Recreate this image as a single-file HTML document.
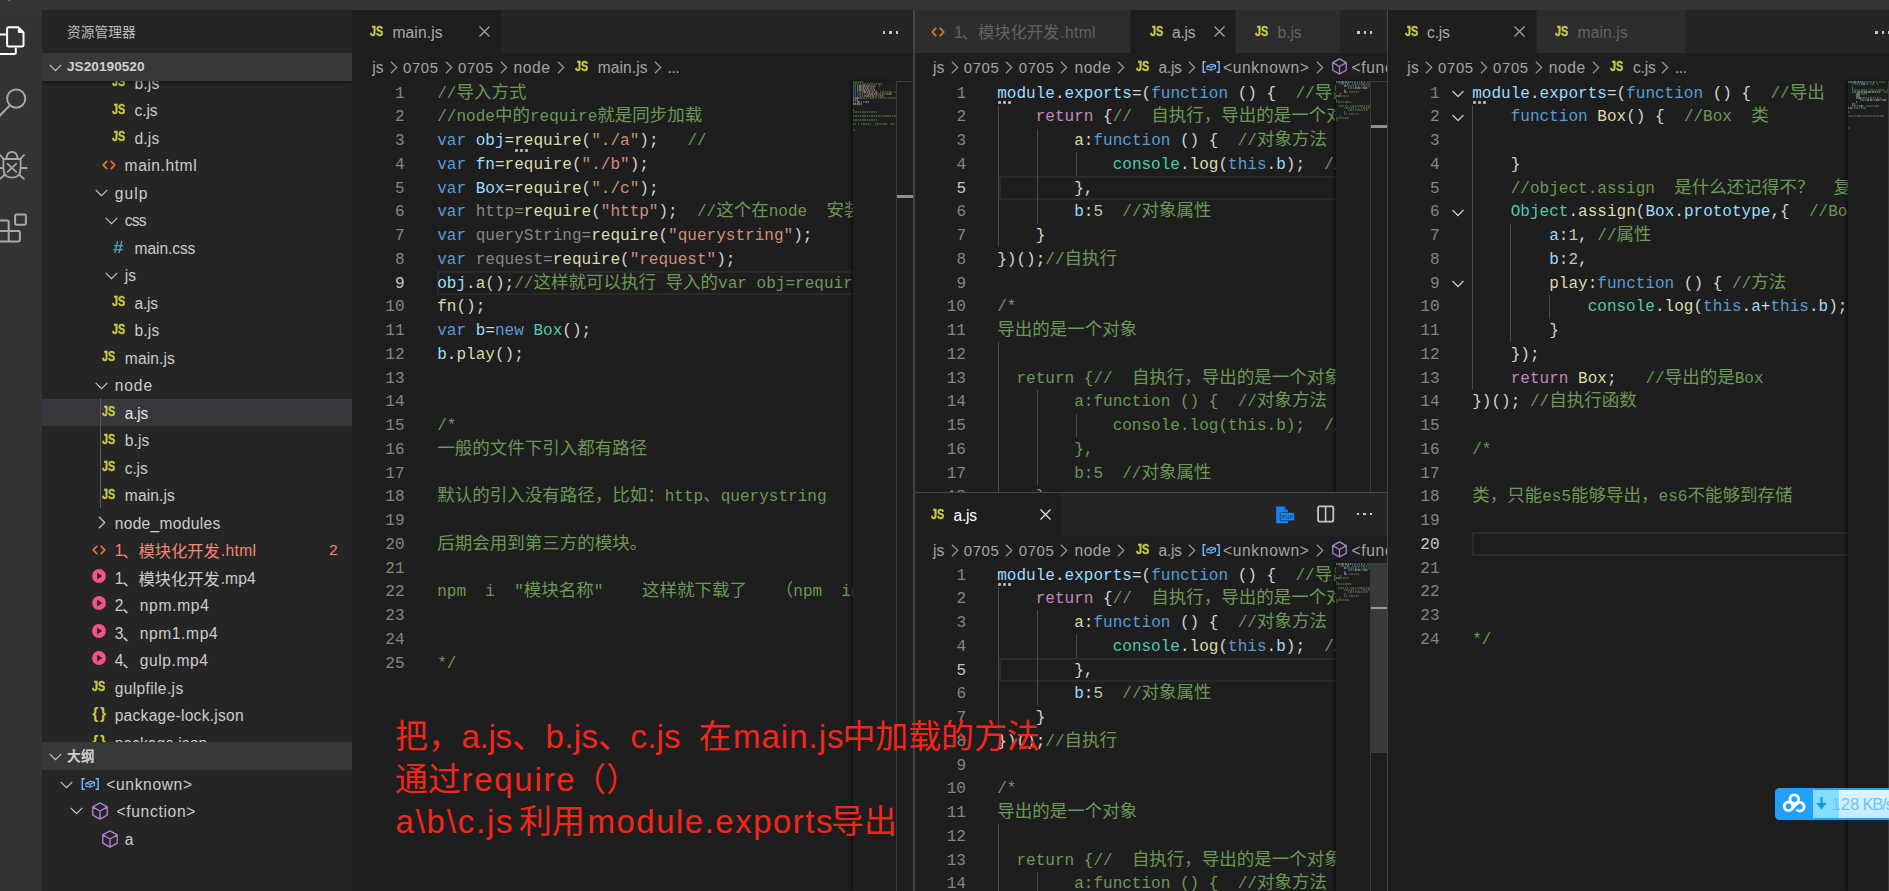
<!DOCTYPE html>
<html lang="zh-CN"><head><meta charset="utf-8"><title>VS Code</title>
<style>
*{box-sizing:border-box;margin:0;padding:0}
html,body{width:1889px;height:891px;overflow:hidden;background:#1e1e1e}
body{position:relative;font-family:"Liberation Sans","Noto Sans CJK SC",sans-serif;font-size:15.6px;color:#ccc}
.abs{position:absolute}
#top{left:0;top:0;width:1889px;height:10px;background:#343434}
#act{left:0;top:10px;width:42px;height:881px;background:#333}
#side{left:42px;top:10px;width:310px;height:881px;background:#252526;overflow:hidden}
.hdr{position:absolute;left:0;width:310px;height:28px;background:#383838;font-weight:bold;color:#d0d0d0;font-size:13.6px}
.hdr span{position:absolute;left:25px;top:0;line-height:28.5px;white-space:pre}
.row{position:absolute;left:0;width:310px;height:27.5px;line-height:27.5px;white-space:pre;color:#ccc}
.lb{position:absolute;top:1px;white-space:pre}
.zu{font-size:16.25px;font-family:"Liberation Sans","Noto Sans CJK SC",sans-serif;letter-spacing:0}
.js{position:absolute;font-weight:bold;font-size:14.2px;color:#cbcb41;letter-spacing:-0.1px;font-family:"Liberation Sans",sans-serif;display:inline-block;transform:scaleX(.77);transform-origin:0 50%;-webkit-text-stroke:0.35px #cbcb41}
.row .zu{top:2.2px}.tab .zu{top:1.7px}
.sel{background:#37373d}
.ed{position:absolute;overflow:hidden}
.ln,.no{position:absolute;height:23.75px;line-height:23.75px;white-space:pre;font-family:"Liberation Mono","Noto Sans CJK SC",monospace;font-size:16.04px;color:#d4d4d4}
.no{left:0;text-align:right;color:#858585}
.no.a{color:#c6c6c6}
.z{font-size:17.5px;font-family:"Liberation Mono","Noto Sans CJK SC",monospace;line-height:0}
.k{color:#569cd6}.c{color:#6a9955}.v{color:#9cdcfe}.f{color:#dcdcaa}.s{color:#ce9178}.t{color:#4ec9b0}.n{color:#b5cea8}.r{color:#c586c0}.u{color:#868686}
.cl{position:absolute;height:23.75px;border:2px solid #2a2a2a}
.ig{position:absolute;width:1px;background:#4b4b4b}
.fd{position:absolute}
.hd{position:absolute;width:13px;height:2px}
.hd i{position:absolute;top:0;width:2.6px;height:2.6px;background:#b4b4b4;border-radius:1px}
.mm{position:absolute;left:0;top:0}
.mm i{position:absolute;height:1.5px;opacity:.42;-webkit-mask-image:repeating-linear-gradient(90deg,#000 0 1.4px,rgba(0,0,0,.35) 1.4px 2.3px);mask-image:repeating-linear-gradient(90deg,#000 0 1.4px,rgba(0,0,0,.35) 1.4px 2.3px)}
.tabs{position:absolute;height:43px;background:#252526;overflow:hidden}
.tab{position:absolute;top:0;height:43px;line-height:43px;white-space:pre}
.tab .lb{top:0.5px}
.tab .js{top:0;line-height:42px}
.bc{position:absolute;height:27.5px;line-height:27.5px;white-space:pre;color:#a4a4a4;overflow:hidden;background:#1e1e1e}
.bc span{position:absolute;top:1.2px}
.bc .js{top:-1.2px}
.vdiv{position:absolute;background:#444}
.dots{position:absolute;width:17px;height:3px}
.dots i{position:absolute;top:0;width:2.4px;height:2.4px;background:#c8c8c8}
</style></head>
<body>
<div id="top" class="abs"><div class="abs" style="left:8px;top:0;width:2.2px;height:1.2px;background:#1a80d2"></div></div>
<div id="act" class="abs">
<svg class="abs" style="left:0;top:0" width="42" height="260" viewBox="0 0 42 260">
<g fill="none" stroke="#fff" stroke-width="2" stroke-linejoin="round">
<path d="M8.6 17.2 L18.3 17.2 L23.5 22.4 L23.5 34.9 Q23.5 36.4 22 36.4 L8.6 36.4 Q7.1 36.4 7.1 34.9 L7.1 18.7 Q7.1 17.2 8.6 17.2 Z"/>
<path d="M18.3 17.6 L18.3 22.4 L23.1 22.4 Z" fill="#fff" stroke-width="1"/>
<path d="M6.5 24.5 L-1 24.5 M15.8 37.4 L15.8 42.5 Q15.8 44 14.3 44 L-1 44"/>
</g>
<g fill="none" stroke="#a9a9a9" stroke-width="2">
<circle cx="16.2" cy="88.6" r="9.1"/>
<path d="M9.8 95.4 L-1 106.6"/>
</g>
<g fill="none" stroke="#a9a9a9" stroke-width="1.8" stroke-linecap="round">
<path d="M3.4 150 Q3 149 4.4 149 L19.6 149 Q21 149 20.6 150 L20.6 158 Q20.6 167.6 12 167.6 Q3.4 167.6 3.4 158 Z"/>
<path d="M6.6 149 Q6.6 141.8 12 141.8 Q17.4 141.8 17.4 149"/>
<path d="M7.6 153.8 L16.2 161.8 M16.2 153.8 L7.6 161.8"/>
<path d="M20.4 148.8 L24 145.2 M21.6 158 L26.6 158 M19.6 165 L23.8 168.8"/>
<path d="M3.6 148.8 L0 145.2 M2.4 158 L-3 158 M4.4 165 L0.2 168.8"/>
</g>
<g fill="none" stroke="#a9a9a9" stroke-width="2" stroke-linejoin="round">
<rect x="15.1" y="204.4" width="10.8" height="10.4" rx="1.4"/>
<path d="M-1 210.5 L7.4 210.5 Q8.7 210.5 8.7 211.8 L8.7 231.4 M-1 221 L18.6 221 Q19.9 221 19.9 222.3 L19.9 230.1 Q19.9 231.4 18.6 231.4 L-1 231.4"/>
</g>
</svg>
</div>
<div id="side" class="abs">
<div class="abs" style="left:25px;top:14px;font-size:13.75px;line-height:18px;color:#bbb;white-space:pre;font-family:'Liberation Sans','Noto Sans CJK SC',sans-serif">资源管理器</div>
<div class="abs" style="left:0;top:71px;width:310px;height:661px;overflow:hidden">
<div class="row" style="top:-12.25px"><span class="js" style="left:70.2px;top:-0.6px;">JS</span><span class="lb" style="left:92.6px;letter-spacing:0.106px;">b.js</span></div>
<div class="row" style="top:15.25px"><span class="js" style="left:70.2px;top:-0.6px;">JS</span><span class="lb" style="left:92.6px;letter-spacing:-0.164px;">c.js</span></div>
<div class="row" style="top:42.75px"><span class="js" style="left:70.2px;top:-0.6px;">JS</span><span class="lb" style="left:92.6px;letter-spacing:0.106px;">d.js</span></div>
<div class="row" style="top:70.25px"><svg class="abs" style="left:60.3px;top:8.3px" width="14" height="10" viewBox="0 0 14 10"><path d="M5.2 0.9 L1.3 5 L5.2 9.1 M8.8 0.9 L12.7 5 L8.8 9.1" fill="none" stroke="#e37933" stroke-width="1.7"/></svg><span class="lb" style="left:82.6px;letter-spacing:0.551px;">main.html</span></div>
<div class="row" style="top:97.75px"><svg class="abs" style="left:52.8px;top:10.4px" width="13" height="8" viewBox="0 0 13 8"><path d="M0.7 0.9 L6.5 6.7 L12.3 0.9" fill="none" stroke="#c5c5c5" stroke-width="1.25"/></svg><span class="lb" style="left:72.7px;letter-spacing:1.072px;">gulp</span></div>
<div class="row" style="top:125.25px"><svg class="abs" style="left:62.9px;top:10.4px" width="13" height="8" viewBox="0 0 13 8"><path d="M0.7 0.9 L6.5 6.7 L12.3 0.9" fill="none" stroke="#c5c5c5" stroke-width="1.25"/></svg><span class="lb" style="left:82.8px;letter-spacing:-0.845px;">css</span></div>
<div class="row" style="top:152.75px"><span class="abs" style="left:71.2px;top:5px;color:#519aba;font-weight:bold;font-size:16.5px;line-height:16px;font-family:'Liberation Sans',sans-serif;transform:scaleX(1.15);transform-origin:0 0">#</span><span class="lb" style="left:92.6px;letter-spacing:-0.104px;">main.css</span></div>
<div class="row" style="top:180.25px"><svg class="abs" style="left:62.9px;top:10.4px" width="13" height="8" viewBox="0 0 13 8"><path d="M0.7 0.9 L6.5 6.7 L12.3 0.9" fill="none" stroke="#c5c5c5" stroke-width="1.25"/></svg><span class="lb" style="left:82.8px;letter-spacing:0.034px;">js</span></div>
<div class="row" style="top:207.75px"><span class="js" style="left:70.2px;top:-0.6px;">JS</span><span class="lb" style="left:92.6px;letter-spacing:-0.294px;">a.js</span></div>
<div class="row" style="top:235.25px"><span class="js" style="left:70.2px;top:-0.6px;">JS</span><span class="lb" style="left:92.6px;letter-spacing:0.106px;">b.js</span></div>
<div class="row" style="top:262.75px"><span class="js" style="left:60.4px;top:-0.6px;">JS</span><span class="lb" style="left:82.8px;letter-spacing:0.099px;">main.js</span></div>
<div class="row" style="top:290.25px"><svg class="abs" style="left:52.8px;top:10.4px" width="13" height="8" viewBox="0 0 13 8"><path d="M0.7 0.9 L6.5 6.7 L12.3 0.9" fill="none" stroke="#c5c5c5" stroke-width="1.25"/></svg><span class="lb" style="left:72.7px;letter-spacing:0.899px;">node</span></div>
<div class="row sel" style="top:317.75px"><span class="js" style="left:60.4px;top:-0.6px;">JS</span><span class="lb" style="left:82.8px;color:#e4e4e4;letter-spacing:-0.294px;">a.js</span></div>
<div class="row" style="top:345.25px"><span class="js" style="left:60.4px;top:-0.6px;">JS</span><span class="lb" style="left:82.8px;letter-spacing:0.106px;">b.js</span></div>
<div class="row" style="top:372.75px"><span class="js" style="left:60.4px;top:-0.6px;">JS</span><span class="lb" style="left:82.8px;letter-spacing:-0.164px;">c.js</span></div>
<div class="row" style="top:400.25px"><span class="js" style="left:60.4px;top:-0.6px;">JS</span><span class="lb" style="left:82.8px;letter-spacing:0.099px;">main.js</span></div>
<div class="row" style="top:427.75px"><svg class="abs" style="left:56.1px;top:7.7px" width="8" height="13" viewBox="0 0 8 13"><path d="M0.9 0.7 L6.7 6.5 L0.9 12.3" fill="none" stroke="#c5c5c5" stroke-width="1.25"/></svg><span class="lb" style="left:72.7px;letter-spacing:0.299px;">node_modules</span></div>
<div class="row" style="top:455.25px"><svg class="abs" style="left:50.4px;top:8.3px" width="14" height="10" viewBox="0 0 14 10"><path d="M5.2 0.9 L1.3 5 L5.2 9.1 M8.8 0.9 L12.7 5 L8.8 9.1" fill="none" stroke="#e37933" stroke-width="1.7"/></svg><span class="lb" style="left:72.7px;color:#f48771;">1</span><span class="lb zu" style="left:80.3px;font-size:16.25px;color:#f48771;">、模块化开发</span><span class="lb" style="left:178.7px;color:#f48771;letter-spacing:0.401px;">.html</span><span class="lb" style="left:287.2px;font-size:15px;color:#f48771;top:-0.4px;">2</span></div>
<div class="row" style="top:482.75px"><svg class="abs" style="left:50.1px;top:4.9px" width="14" height="14" viewBox="0 0 14 14"><circle cx="7" cy="7" r="6.9" fill="#f55385"/><path d="M5.1 3.6 L10.2 7 L5.1 10.4 Z" fill="#252526"/></svg><span class="lb" style="left:72.7px;">1</span><span class="lb zu" style="left:80.3px;font-size:16.25px;">、模块化开发</span><span class="lb" style="left:178.7px;letter-spacing:0.076px;">.mp4</span></div>
<div class="row" style="top:510.25px"><svg class="abs" style="left:50.1px;top:4.9px" width="14" height="14" viewBox="0 0 14 14"><circle cx="7" cy="7" r="6.9" fill="#f55385"/><path d="M5.1 3.6 L10.2 7 L5.1 10.4 Z" fill="#252526"/></svg><span class="lb" style="left:72.7px;">2</span><span class="lb zu" style="left:80.3px;font-size:16.25px;">、</span><span class="lb" style="left:97.7px;letter-spacing:0.697px;">npm.mp4</span></div>
<div class="row" style="top:537.75px"><svg class="abs" style="left:50.1px;top:4.9px" width="14" height="14" viewBox="0 0 14 14"><circle cx="7" cy="7" r="6.9" fill="#f55385"/><path d="M5.1 3.6 L10.2 7 L5.1 10.4 Z" fill="#252526"/></svg><span class="lb" style="left:72.7px;">3</span><span class="lb zu" style="left:80.3px;font-size:16.25px;">、</span><span class="lb" style="left:97.7px;letter-spacing:0.602px;">npm1.mp4</span></div>
<div class="row" style="top:565.25px"><svg class="abs" style="left:50.1px;top:4.9px" width="14" height="14" viewBox="0 0 14 14"><circle cx="7" cy="7" r="6.9" fill="#f55385"/><path d="M5.1 3.6 L10.2 7 L5.1 10.4 Z" fill="#252526"/></svg><span class="lb" style="left:72.7px;">4</span><span class="lb zu" style="left:80.3px;font-size:16.25px;">、</span><span class="lb" style="left:97.7px;letter-spacing:0.592px;">gulp.mp4</span></div>
<div class="row" style="top:592.75px"><span class="js" style="left:50.3px;top:-0.6px;">JS</span><span class="lb" style="left:72.7px;letter-spacing:0.348px;">gulpfile.js</span></div>
<div class="row" style="top:620.25px"><span class="abs" style="left:50.3px;top:6px;color:#cbcb41;font-weight:bold;font-size:15.6px;line-height:14px;font-family:'Liberation Sans',sans-serif;letter-spacing:1.6px">{}</span><span class="lb" style="left:72.7px;letter-spacing:0.261px;">package-lock.json</span></div>
<div class="row" style="top:647.75px"><span class="abs" style="left:50.3px;top:6px;color:#cbcb41;font-weight:bold;font-size:15.6px;line-height:14px;font-family:'Liberation Sans',sans-serif;letter-spacing:1.6px">{}</span><span class="lb" style="left:72.7px;letter-spacing:0.045px;">package.json</span></div>
<div class="abs" style="left:58px;top:317.25px;width:1px;height:110px;background:#5a5a5a"></div>
</div>
<div class="hdr" style="top:43px;box-shadow:0 2px 3px rgba(0,0,0,.4)"><svg class="abs" style="left:6.7px;top:10.6px" width="13" height="8" viewBox="0 0 13 8"><path d="M0.7 0.9 L6.5 6.7 L12.3 0.9" fill="none" stroke="#c5c5c5" stroke-width="1.25"/></svg><span class="" style="left:25px;font-size:13.6px;font-weight:bold;letter-spacing:0.043px;">JS20190520</span></div>
<div class="hdr" style="top:732px"><svg class="abs" style="left:6.7px;top:11px" width="13" height="8" viewBox="0 0 13 8"><path d="M0.7 0.9 L6.5 6.7 L12.3 0.9" fill="none" stroke="#c5c5c5" stroke-width="1.25"/></svg><span style="font-family:'Liberation Sans','Noto Sans CJK SC',sans-serif;font-size:13.75px;top:1px">大纲</span></div>
<div class="row" style="top:760.45px"><svg class="abs" style="left:18px;top:10.4px" width="13" height="8" viewBox="0 0 13 8"><path d="M0.7 0.9 L6.5 6.7 L12.3 0.9" fill="none" stroke="#c5c5c5" stroke-width="1.25"/></svg><svg class="abs" style="left:38.8px;top:7.6px" width="18.4" height="12" viewBox="0 0 19 13"><path d="M3.6 0.8 L0.9 0.8 L0.9 12.2 L3.6 12.2 M15.4 0.8 L18.1 0.8 L18.1 12.2 L15.4 12.2" fill="none" stroke="#75beff" stroke-width="1.5"/><path d="M4.8 5.8 L9.8 3.6 L14.2 4.6 L14.2 8 L9.4 10 L4.8 9 Z M4.8 5.8 L9.4 6.8 L14.2 4.6 M9.4 6.8 L9.4 10" fill="none" stroke="#75beff" stroke-width="1.1" stroke-linejoin="round"/></svg><span class="lb" style="left:64.3px;letter-spacing:0.632px;">&lt;unknown&gt;</span></div>
<div class="row" style="top:787.05px"><svg class="abs" style="left:28px;top:10.4px" width="13" height="8" viewBox="0 0 13 8"><path d="M0.7 0.9 L6.5 6.7 L12.3 0.9" fill="none" stroke="#c5c5c5" stroke-width="1.25"/></svg><svg class="abs" style="left:50.2px;top:4.7px" width="16" height="18.0" viewBox="0 0 16 18"><path d="M8 0.9 L15.2 4.9 L15.2 13.1 L8 17.1 L0.8 13.1 L0.8 4.9 Z M0.8 4.9 L8 9 L15.2 4.9 M8 9 L8 17.1" fill="none" stroke="#b180d7" stroke-width="1.35" stroke-linejoin="round"/></svg><span class="lb" style="left:74.4px;letter-spacing:0.684px;">&lt;function&gt;</span></div>
<div class="row" style="top:815.45px"><svg class="abs" style="left:60.3px;top:4.7px" width="16" height="18.0" viewBox="0 0 16 18"><path d="M8 0.9 L15.2 4.9 L15.2 13.1 L8 17.1 L0.8 13.1 L0.8 4.9 Z M0.8 4.9 L8 9 L15.2 4.9 M8 9 L8 17.1" fill="none" stroke="#b180d7" stroke-width="1.35" stroke-linejoin="round"/></svg><span class="lb" style="left:82.8px;">a</span></div>
</div>
<div class="tabs" style="left:352px;top:10px;width:561px"><div class="tab" style="left:0px;width:149.5px;background:#1e1e1e;border-right:1px solid #252526"><span class="js" style="left:17.9px;top:-0.4px;">JS</span><span class="lb" style="left:40.4px;color:#aaaaaa;letter-spacing:0.132px;">main.js</span><svg class="abs" style="left:126.5px;top:15.7px" width="11" height="11" viewBox="0 0 11 11"><path d="M0.5 0.5 L10.5 10.5 M10.5 0.5 L0.5 10.5" stroke="#a4a4a4" stroke-width="1.2" fill="none"/></svg></div><div class="dots" style="left:531px;top:21.2px"><i style="left:0;background:#c8c8c8"></i><i style="left:6.3px;background:#c8c8c8"></i><i style="left:12.6px;background:#c8c8c8"></i></div></div>
<div class="bc" style="left:352px;top:53px;width:561px"><span class="" style="left:20.2px;letter-spacing:0.134px;">js</span><svg class="abs" style="left:37.8px;top:8.2px" width="8" height="13" viewBox="0 0 8 13"><path d="M0.9 0.7 L6.7 6.5 L0.9 12.3" fill="none" stroke="#969696" stroke-width="1.25"/></svg><span class="" style="left:51px;font-size:14.9px;letter-spacing:0.620px;top:1.5px;">0705</span><svg class="abs" style="left:92.6px;top:8.2px" width="8" height="13" viewBox="0 0 8 13"><path d="M0.9 0.7 L6.7 6.5 L0.9 12.3" fill="none" stroke="#969696" stroke-width="1.25"/></svg><span class="" style="left:106px;font-size:14.9px;letter-spacing:0.620px;top:1.5px;">0705</span><svg class="abs" style="left:147.6px;top:8.2px" width="8" height="13" viewBox="0 0 8 13"><path d="M0.9 0.7 L6.7 6.5 L0.9 12.3" fill="none" stroke="#969696" stroke-width="1.25"/></svg><span class="" style="left:161.6px;letter-spacing:0.566px;">node</span><svg class="abs" style="left:204.6px;top:8.2px" width="8" height="13" viewBox="0 0 8 13"><path d="M0.9 0.7 L6.7 6.5 L0.9 12.3" fill="none" stroke="#969696" stroke-width="1.25"/></svg><span class="js" style="left:223.4px;top:0px;">JS</span><span class="" style="left:245.8px;letter-spacing:0.066px;">main.js</span><svg class="abs" style="left:301.8px;top:8.2px" width="8" height="13" viewBox="0 0 8 13"><path d="M0.9 0.7 L6.7 6.5 L0.9 12.3" fill="none" stroke="#969696" stroke-width="1.25"/></svg><span class="" style="left:315.6px;letter-spacing:-0.500px;">...</span></div>
<div class="ed" style="left:352px;top:80.5px;width:501px;height:810.5px">
<div class="cl" style="left:85px;top:190.5px;width:463px"></div>
<div class="no" style="top:2.2px;width:52.6px">1</div>
<div class="ln" style="top:2.2px;left:85.2px"><span class="c">//<span class="z">导入方式</span></span></div>
<div class="no" style="top:25.95px;width:52.6px">2</div>
<div class="ln" style="top:25.95px;left:85.2px"><span class="c">//node<span class="z">中的</span>require<span class="z">就是同步加载</span></span></div>
<div class="no" style="top:49.7px;width:52.6px">3</div>
<div class="ln" style="top:49.7px;left:85.2px"><span class="k">var</span> <span class="v">obj</span>=<span class="f">require</span>(<span class="s">"./a"</span>);   <span class="c">//</span></div>
<div class="no" style="top:73.45px;width:52.6px">4</div>
<div class="ln" style="top:73.45px;left:85.2px"><span class="k">var</span> <span class="v">fn</span>=<span class="f">require</span>(<span class="s">"./b"</span>);</div>
<div class="no" style="top:97.2px;width:52.6px">5</div>
<div class="ln" style="top:97.2px;left:85.2px"><span class="k">var</span> <span class="v">Box</span>=<span class="f">require</span>(<span class="s">"./c"</span>);</div>
<div class="no" style="top:120.95px;width:52.6px">6</div>
<div class="ln" style="top:120.95px;left:85.2px"><span class="k">var</span> <span class="u">http=</span><span class="f">require</span>(<span class="s">"http"</span>);  <span class="c">//<span class="z">这个在</span>node  <span class="z">安装了以后就有了</span></span></div>
<div class="no" style="top:144.7px;width:52.6px">7</div>
<div class="ln" style="top:144.7px;left:85.2px"><span class="k">var</span> <span class="u">queryString=</span><span class="f">require</span>(<span class="s">"querystring"</span>);</div>
<div class="no" style="top:168.45px;width:52.6px">8</div>
<div class="ln" style="top:168.45px;left:85.2px"><span class="k">var</span> <span class="u">request=</span><span class="f">require</span>(<span class="s">"request"</span>);</div>
<div class="no a" style="top:192.2px;width:52.6px">9</div>
<div class="ln" style="top:192.2px;left:85.2px"><span class="v">obj</span>.<span class="f">a</span>();<span class="c">//<span class="z">这样就可以执行</span> <span class="z">导入的</span>var obj=require("./a")</span></div>
<div class="no" style="top:215.95px;width:52.6px">10</div>
<div class="ln" style="top:215.95px;left:85.2px"><span class="f">fn</span>();</div>
<div class="no" style="top:239.7px;width:52.6px">11</div>
<div class="ln" style="top:239.7px;left:85.2px"><span class="k">var</span> <span class="v">b</span>=<span class="k">new</span> <span class="t">Box</span>();</div>
<div class="no" style="top:263.45px;width:52.6px">12</div>
<div class="ln" style="top:263.45px;left:85.2px"><span class="v">b</span>.<span class="f">play</span>();</div>
<div class="no" style="top:287.2px;width:52.6px">13</div>
<div class="no" style="top:310.95px;width:52.6px">14</div>
<div class="no" style="top:334.7px;width:52.6px">15</div>
<div class="ln" style="top:334.7px;left:85.2px"><span class="c">/*</span></div>
<div class="no" style="top:358.45px;width:52.6px">16</div>
<div class="ln" style="top:358.45px;left:85.2px"><span class="c"><span class="z">一般的文件下引入都有路径</span></span></div>
<div class="no" style="top:382.2px;width:52.6px">17</div>
<div class="no" style="top:405.95px;width:52.6px">18</div>
<div class="ln" style="top:405.95px;left:85.2px"><span class="c"><span class="z">默认的引入没有路径，比如：</span>http<span class="z">、</span>querystring</span></div>
<div class="no" style="top:429.7px;width:52.6px">19</div>
<div class="no" style="top:453.45px;width:52.6px">20</div>
<div class="ln" style="top:453.45px;left:85.2px"><span class="c"><span class="z">后期会用到第三方的模块。</span></span></div>
<div class="no" style="top:477.2px;width:52.6px">21</div>
<div class="no" style="top:500.95px;width:52.6px">22</div>
<div class="ln" style="top:500.95px;left:85.2px"><span class="c">npm  i  "<span class="z">模块名称</span>"    <span class="z">这样就下载了</span>   <span class="z">（</span>npm  install  <span class="z">模块名称）</span></span></div>
<div class="no" style="top:524.7px;width:52.6px">23</div>
<div class="no" style="top:548.45px;width:52.6px">24</div>
<div class="no" style="top:572.2px;width:52.6px">25</div>
<div class="ln" style="top:572.2px;left:85.2px"><span class="c">*/</span></div>
</div>
<div class="hd" style="left:515px;top:149px"><i style="left:0"></i><i style="left:5px"></i><i style="left:10px"></i></div>
<div class="abs" style="left:853px;top:81px;width:43px;height:810px;background:#1e1e1e;box-shadow:-2px 0 3px rgba(0,0,0,.5);overflow:hidden"><div class="mm"><i style="left:0px;top:0.2px;width:10px;background:#6a9955"></i><i style="left:0px;top:2.2px;width:29px;background:#6a9955"></i><i style="left:0px;top:4.2px;width:3px;background:#569cd6"></i><i style="left:4px;top:4.2px;width:3px;background:#9cdcfe"></i><i style="left:7px;top:4.2px;width:1px;background:#d4d4d4"></i><i style="left:8px;top:4.2px;width:7px;background:#dcdcaa"></i><i style="left:15px;top:4.2px;width:1px;background:#d4d4d4"></i><i style="left:16px;top:4.2px;width:5px;background:#ce9178"></i><i style="left:21px;top:4.2px;width:2px;background:#d4d4d4"></i><i style="left:26px;top:4.2px;width:2px;background:#6a9955"></i><i style="left:0px;top:6.2px;width:3px;background:#569cd6"></i><i style="left:4px;top:6.2px;width:2px;background:#9cdcfe"></i><i style="left:6px;top:6.2px;width:1px;background:#d4d4d4"></i><i style="left:7px;top:6.2px;width:7px;background:#dcdcaa"></i><i style="left:14px;top:6.2px;width:1px;background:#d4d4d4"></i><i style="left:15px;top:6.2px;width:5px;background:#ce9178"></i><i style="left:20px;top:6.2px;width:2px;background:#d4d4d4"></i><i style="left:0px;top:8.2px;width:3px;background:#569cd6"></i><i style="left:4px;top:8.2px;width:3px;background:#9cdcfe"></i><i style="left:7px;top:8.2px;width:1px;background:#d4d4d4"></i><i style="left:8px;top:8.2px;width:7px;background:#dcdcaa"></i><i style="left:15px;top:8.2px;width:1px;background:#d4d4d4"></i><i style="left:16px;top:8.2px;width:5px;background:#ce9178"></i><i style="left:21px;top:8.2px;width:2px;background:#d4d4d4"></i><i style="left:0px;top:10.2px;width:3px;background:#569cd6"></i><i style="left:4px;top:10.2px;width:5px;background:#868686"></i><i style="left:9px;top:10.2px;width:7px;background:#dcdcaa"></i><i style="left:16px;top:10.2px;width:1px;background:#d4d4d4"></i><i style="left:17px;top:10.2px;width:6px;background:#ce9178"></i><i style="left:23px;top:10.2px;width:2px;background:#d4d4d4"></i><i style="left:27px;top:10.2px;width:12px;background:#6a9955"></i><i style="left:41px;top:10.2px;width:2px;background:#6a9955"></i><i style="left:0px;top:12.2px;width:3px;background:#569cd6"></i><i style="left:4px;top:12.2px;width:12px;background:#868686"></i><i style="left:16px;top:12.2px;width:7px;background:#dcdcaa"></i><i style="left:23px;top:12.2px;width:1px;background:#d4d4d4"></i><i style="left:24px;top:12.2px;width:13px;background:#ce9178"></i><i style="left:37px;top:12.2px;width:2px;background:#d4d4d4"></i><i style="left:0px;top:14.2px;width:3px;background:#569cd6"></i><i style="left:4px;top:14.2px;width:8px;background:#868686"></i><i style="left:12px;top:14.2px;width:7px;background:#dcdcaa"></i><i style="left:19px;top:14.2px;width:1px;background:#d4d4d4"></i><i style="left:20px;top:14.2px;width:9px;background:#ce9178"></i><i style="left:29px;top:14.2px;width:2px;background:#d4d4d4"></i><i style="left:0px;top:16.2px;width:3px;background:#9cdcfe"></i><i style="left:3px;top:16.2px;width:1px;background:#d4d4d4"></i><i style="left:4px;top:16.2px;width:1px;background:#dcdcaa"></i><i style="left:5px;top:16.2px;width:3px;background:#d4d4d4"></i><i style="left:8px;top:16.2px;width:16px;background:#6a9955"></i><i style="left:25px;top:16.2px;width:9px;background:#6a9955"></i><i style="left:35px;top:16.2px;width:8px;background:#6a9955"></i><i style="left:0px;top:18.2px;width:2px;background:#dcdcaa"></i><i style="left:2px;top:18.2px;width:3px;background:#d4d4d4"></i><i style="left:0px;top:20.2px;width:3px;background:#569cd6"></i><i style="left:4px;top:20.2px;width:1px;background:#9cdcfe"></i><i style="left:5px;top:20.2px;width:1px;background:#d4d4d4"></i><i style="left:6px;top:20.2px;width:3px;background:#569cd6"></i><i style="left:10px;top:20.2px;width:3px;background:#4ec9b0"></i><i style="left:13px;top:20.2px;width:3px;background:#d4d4d4"></i><i style="left:0px;top:22.2px;width:1px;background:#9cdcfe"></i><i style="left:1px;top:22.2px;width:1px;background:#d4d4d4"></i><i style="left:2px;top:22.2px;width:4px;background:#dcdcaa"></i><i style="left:6px;top:22.2px;width:3px;background:#d4d4d4"></i><i style="left:0px;top:28.2px;width:2px;background:#6a9955"></i><i style="left:0px;top:30.2px;width:24px;background:#6a9955"></i><i style="left:0px;top:34.2px;width:43px;background:#6a9955"></i><i style="left:0px;top:38.2px;width:24px;background:#6a9955"></i><i style="left:0px;top:42.2px;width:3px;background:#6a9955"></i><i style="left:5px;top:42.2px;width:1px;background:#6a9955"></i><i style="left:8px;top:42.2px;width:10px;background:#6a9955"></i><i style="left:22px;top:42.2px;width:12px;background:#6a9955"></i><i style="left:37px;top:42.2px;width:5px;background:#6a9955"></i><i style="left:0px;top:48.2px;width:2px;background:#6a9955"></i></div></div>
<div class="abs" style="left:896px;top:81px;width:17px;height:810px;border-left:1px solid #3a3a3a;border-top:1px solid #3a3a3a"><div class="abs" style="left:0;top:113px;width:16px;height:2.5px;background:#8f8f8f"></div></div>
<div class="vdiv" style="left:913px;top:10px;width:2px;height:881px"></div>
<div class="tabs" style="left:915px;top:10px;width:471.5px"><div class="tab" style="left:0px;width:216.4px;background:#2d2d2d;border-right:1px solid #252526"><svg class="abs" style="left:16.2px;top:16.6px" width="14" height="10" viewBox="0 0 14 10"><path d="M5.2 0.9 L1.3 5 L5.2 9.1 M8.8 0.9 L12.7 5 L8.8 9.1" fill="none" stroke="#e37933" stroke-width="1.7"/></svg><span class="lb" style="left:39.2px;color:#636363;">1</span><span class="lb zu" style="left:46.8px;font-size:16.25px;color:#636363;">、模块化开发</span><span class="lb" style="left:145.2px;color:#636363;letter-spacing:0.401px;">.html</span></div><div class="tab" style="left:216.4px;width:105px;background:#1e1e1e;border-right:1px solid #252526"><span class="js" style="left:18.5px;top:-0.4px;">JS</span><span class="lb" style="left:40.7px;color:#aaaaaa;letter-spacing:-0.294px;">a.js</span><svg class="abs" style="left:82.4px;top:15.7px" width="11" height="11" viewBox="0 0 11 11"><path d="M0.5 0.5 L10.5 10.5 M10.5 0.5 L0.5 10.5" stroke="#a4a4a4" stroke-width="1.2" fill="none"/></svg></div><div class="tab" style="left:321.4px;width:104.6px;background:#2d2d2d;border-right:1px solid #252526"><span class="js" style="left:18.6px;top:-0.4px;">JS</span><span class="lb" style="left:41.2px;color:#636363;letter-spacing:-0.060px;">b.js</span></div><div class="dots" style="left:442.3px;top:21.2px"><i style="left:0;background:#c8c8c8"></i><i style="left:6.3px;background:#c8c8c8"></i><i style="left:12.6px;background:#c8c8c8"></i></div></div>
<div class="bc" style="left:915px;top:53px;width:471.5px"><span class="" style="left:18px;letter-spacing:0.134px;">js</span><svg class="abs" style="left:35.6px;top:8.2px" width="8" height="13" viewBox="0 0 8 13"><path d="M0.9 0.7 L6.7 6.5 L0.9 12.3" fill="none" stroke="#969696" stroke-width="1.25"/></svg><span class="" style="left:48.8px;font-size:14.9px;letter-spacing:0.620px;top:1.5px;">0705</span><svg class="abs" style="left:90.4px;top:8.2px" width="8" height="13" viewBox="0 0 8 13"><path d="M0.9 0.7 L6.7 6.5 L0.9 12.3" fill="none" stroke="#969696" stroke-width="1.25"/></svg><span class="" style="left:103.8px;font-size:14.9px;letter-spacing:0.620px;top:1.5px;">0705</span><svg class="abs" style="left:145.4px;top:8.2px" width="8" height="13" viewBox="0 0 8 13"><path d="M0.9 0.7 L6.7 6.5 L0.9 12.3" fill="none" stroke="#969696" stroke-width="1.25"/></svg><span class="" style="left:159.4px;letter-spacing:0.566px;">node</span><svg class="abs" style="left:202.4px;top:8.2px" width="8" height="13" viewBox="0 0 8 13"><path d="M0.9 0.7 L6.7 6.5 L0.9 12.3" fill="none" stroke="#969696" stroke-width="1.25"/></svg><span class="js" style="left:221.2px;top:0px;">JS</span><span class="" style="left:243.6px;letter-spacing:-0.327px;">a.js</span><svg class="abs" style="left:272.8px;top:8.2px" width="8" height="13" viewBox="0 0 8 13"><path d="M0.9 0.7 L6.7 6.5 L0.9 12.3" fill="none" stroke="#969696" stroke-width="1.25"/></svg><svg class="abs" style="left:286.7px;top:7.8px" width="18.4" height="12" viewBox="0 0 19 13"><path d="M3.6 0.8 L0.9 0.8 L0.9 12.2 L3.6 12.2 M15.4 0.8 L18.1 0.8 L18.1 12.2 L15.4 12.2" fill="none" stroke="#75beff" stroke-width="1.5"/><path d="M4.8 5.8 L9.8 3.6 L14.2 4.6 L14.2 8 L9.4 10 L4.8 9 Z M4.8 5.8 L9.4 6.8 L14.2 4.6 M9.4 6.8 L9.4 10" fill="none" stroke="#75beff" stroke-width="1.1" stroke-linejoin="round"/></svg><span class="" style="left:307.9px;letter-spacing:0.670px;">&lt;unknown&gt;</span><svg class="abs" style="left:400.8px;top:8.2px" width="8" height="13" viewBox="0 0 8 13"><path d="M0.9 0.7 L6.7 6.5 L0.9 12.3" fill="none" stroke="#969696" stroke-width="1.25"/></svg><svg class="abs" style="left:416.5px;top:5px" width="15" height="16.875" viewBox="0 0 16 18"><path d="M8 0.9 L15.2 4.9 L15.2 13.1 L8 17.1 L0.8 13.1 L0.8 4.9 Z M0.8 4.9 L8 9 L15.2 4.9 M8 9 L8 17.1" fill="none" stroke="#b180d7" stroke-width="1.35" stroke-linejoin="round"/></svg><span class="" style="left:436.4px;letter-spacing:0.684px;">&lt;function&gt;</span></div>
<div class="ed" style="left:915px;top:80.5px;width:421px;height:411.2px">
<div class="cl" style="left:83.5px;top:95.5px;width:381.5px"></div>
<div class="ig" style="left:83px;top:24.25px;height:142.5px"></div>
<div class="ig" style="left:122px;top:48px;height:95px"></div>
<div class="ig" style="left:161px;top:71.75px;height:23.75px"></div>
<div class="ig" style="left:83px;top:261.75px;height:190px"></div>
<div class="ig" style="left:122px;top:309.25px;height:95px"></div>
<div class="ig" style="left:161px;top:333px;height:23.75px"></div>
<div class="no" style="top:2.2px;width:51px">1</div>
<div class="ln" style="top:2.2px;left:82.2px"><span class="v">module</span>.<span class="v">exports</span>=(<span class="k">function</span> () {  <span class="c">//<span class="z">导出</span></span></div>
<div class="no" style="top:25.95px;width:51px">2</div>
<div class="ln" style="top:25.95px;left:82.2px">    <span class="r">return</span> {<span class="c">//  <span class="z">自执行，导出的是一个对象</span></span></div>
<div class="no" style="top:49.7px;width:51px">3</div>
<div class="ln" style="top:49.7px;left:82.2px">        <span class="f">a</span>:<span class="k">function</span> () {  <span class="c">//<span class="z">对象方法</span></span></div>
<div class="no" style="top:73.45px;width:51px">4</div>
<div class="ln" style="top:73.45px;left:82.2px">            <span class="t">console</span>.<span class="f">log</span>(<span class="k">this</span>.<span class="v">b</span>);  <span class="c">//<span class="z">对象属性</span></span></div>
<div class="no a" style="top:97.2px;width:51px">5</div>
<div class="ln" style="top:97.2px;left:82.2px">        },</div>
<div class="no" style="top:120.95px;width:51px">6</div>
<div class="ln" style="top:120.95px;left:82.2px">        <span class="v">b</span>:<span class="n">5</span>  <span class="c">//<span class="z">对象属性</span></span></div>
<div class="no" style="top:144.7px;width:51px">7</div>
<div class="ln" style="top:144.7px;left:82.2px">    }</div>
<div class="no" style="top:168.45px;width:51px">8</div>
<div class="ln" style="top:168.45px;left:82.2px">})();<span class="c">//<span class="z">自执行</span></span></div>
<div class="no" style="top:192.2px;width:51px">9</div>
<div class="no" style="top:215.95px;width:51px">10</div>
<div class="ln" style="top:215.95px;left:82.2px"><span class="c">/*</span></div>
<div class="no" style="top:239.7px;width:51px">11</div>
<div class="ln" style="top:239.7px;left:82.2px"><span class="c"><span class="z">导出的是一个对象</span></span></div>
<div class="no" style="top:263.45px;width:51px">12</div>
<div class="no" style="top:287.2px;width:51px">13</div>
<div class="ln" style="top:287.2px;left:82.2px"><span class="c">  return {//  <span class="z">自执行，导出的是一个对象</span></span></div>
<div class="no" style="top:310.95px;width:51px">14</div>
<div class="ln" style="top:310.95px;left:82.2px"><span class="c">        a:function () {  //<span class="z">对象方法</span></span></div>
<div class="no" style="top:334.7px;width:51px">15</div>
<div class="ln" style="top:334.7px;left:82.2px"><span class="c">            console.log(this.b);  //<span class="z">对象属性</span></span></div>
<div class="no" style="top:358.45px;width:51px">16</div>
<div class="ln" style="top:358.45px;left:82.2px"><span class="c">        },</span></div>
<div class="no" style="top:382.2px;width:51px">17</div>
<div class="ln" style="top:382.2px;left:82.2px"><span class="c">        b:5  //<span class="z">对象属性</span></span></div>
<div class="no" style="top:405.95px;width:51px">18</div>
<div class="ln" style="top:405.95px;left:82.2px"><span class="c">    }</span></div>
<div class="no" style="top:429.7px;width:51px">19</div>
<div class="ln" style="top:429.7px;left:82.2px"><span class="c">})();//<span class="z">自执行</span></span></div>
<div class="no" style="top:453.45px;width:51px">20</div>
<div class="ln" style="top:453.45px;left:82.2px"><span class="c">*/</span></div>
</div>
<div class="hd" style="left:998px;top:101px"><i style="left:0"></i><i style="left:5px"></i><i style="left:10px"></i></div>
<div class="abs" style="left:1336px;top:81px;width:34px;height:410.7px;background:#1e1e1e;box-shadow:-2px 0 3px rgba(0,0,0,.5);overflow:hidden"><div class="mm"><i style="left:0px;top:0.2px;width:6px;background:#9cdcfe"></i><i style="left:6px;top:0.2px;width:1px;background:#d4d4d4"></i><i style="left:7px;top:0.2px;width:7px;background:#9cdcfe"></i><i style="left:14px;top:0.2px;width:2px;background:#d4d4d4"></i><i style="left:16px;top:0.2px;width:8px;background:#569cd6"></i><i style="left:25px;top:0.2px;width:2px;background:#d4d4d4"></i><i style="left:28px;top:0.2px;width:1px;background:#d4d4d4"></i><i style="left:31px;top:0.2px;width:3px;background:#6a9955"></i><i style="left:4px;top:2.2px;width:6px;background:#c586c0"></i><i style="left:11px;top:2.2px;width:1px;background:#d4d4d4"></i><i style="left:12px;top:2.2px;width:2px;background:#6a9955"></i><i style="left:16px;top:2.2px;width:18px;background:#6a9955"></i><i style="left:8px;top:4.2px;width:1px;background:#dcdcaa"></i><i style="left:9px;top:4.2px;width:1px;background:#d4d4d4"></i><i style="left:10px;top:4.2px;width:8px;background:#569cd6"></i><i style="left:19px;top:4.2px;width:2px;background:#d4d4d4"></i><i style="left:22px;top:4.2px;width:1px;background:#d4d4d4"></i><i style="left:25px;top:4.2px;width:9px;background:#6a9955"></i><i style="left:12px;top:6.2px;width:7px;background:#4ec9b0"></i><i style="left:19px;top:6.2px;width:1px;background:#d4d4d4"></i><i style="left:20px;top:6.2px;width:3px;background:#dcdcaa"></i><i style="left:23px;top:6.2px;width:1px;background:#d4d4d4"></i><i style="left:24px;top:6.2px;width:4px;background:#569cd6"></i><i style="left:28px;top:6.2px;width:1px;background:#d4d4d4"></i><i style="left:29px;top:6.2px;width:1px;background:#9cdcfe"></i><i style="left:30px;top:6.2px;width:2px;background:#d4d4d4"></i><i style="left:8px;top:8.2px;width:2px;background:#d4d4d4"></i><i style="left:8px;top:10.2px;width:1px;background:#9cdcfe"></i><i style="left:9px;top:10.2px;width:1px;background:#d4d4d4"></i><i style="left:10px;top:10.2px;width:1px;background:#b5cea8"></i><i style="left:13px;top:10.2px;width:10px;background:#6a9955"></i><i style="left:4px;top:12.2px;width:1px;background:#d4d4d4"></i><i style="left:0px;top:14.2px;width:5px;background:#d4d4d4"></i><i style="left:5px;top:14.2px;width:8px;background:#6a9955"></i><i style="left:0px;top:18.2px;width:2px;background:#6a9955"></i><i style="left:0px;top:20.2px;width:16px;background:#6a9955"></i><i style="left:2px;top:24.2px;width:6px;background:#6a9955"></i><i style="left:9px;top:24.2px;width:3px;background:#6a9955"></i><i style="left:14px;top:24.2px;width:20px;background:#6a9955"></i><i style="left:8px;top:26.2px;width:10px;background:#6a9955"></i><i style="left:19px;top:26.2px;width:2px;background:#6a9955"></i><i style="left:22px;top:26.2px;width:1px;background:#6a9955"></i><i style="left:25px;top:26.2px;width:9px;background:#6a9955"></i><i style="left:12px;top:28.2px;width:20px;background:#6a9955"></i><i style="left:8px;top:30.2px;width:2px;background:#6a9955"></i><i style="left:8px;top:32.2px;width:3px;background:#6a9955"></i><i style="left:13px;top:32.2px;width:10px;background:#6a9955"></i><i style="left:4px;top:34.2px;width:1px;background:#6a9955"></i><i style="left:0px;top:36.2px;width:13px;background:#6a9955"></i><i style="left:0px;top:38.2px;width:2px;background:#6a9955"></i></div></div>
<div class="abs" style="left:1370px;top:81px;width:17px;height:410.7px;border-left:1px solid #3a3a3a;border-top:1px solid #3a3a3a"><div class="abs" style="left:0;top:43px;width:16px;height:2.5px;background:#8f8f8f"></div></div>
<div class="vdiv" style="left:915px;top:491.7px;width:472px;height:1.3px"></div>
<div class="tabs" style="left:915px;top:493px;width:471.5px"><div class="tab" style="left:0px;width:147.3px;background:#1e1e1e;border-right:1px solid #252526"><span class="js" style="left:15.9px;top:-0.4px;">JS</span><span class="lb" style="left:38.6px;color:#fff;letter-spacing:-0.294px;">a.js</span><svg class="abs" style="left:124.6px;top:15.7px" width="11" height="11" viewBox="0 0 11 11"><path d="M0.5 0.5 L10.5 10.5 M10.5 0.5 L0.5 10.5" stroke="#e8e8e8" stroke-width="1.2" fill="none"/></svg></div><svg class="abs" style="left:361px;top:13px" width="19" height="18" viewBox="0 0 19 18"><path d="M0.2 0.4 L8 0.4 L12 4.4 L12 17.3 L0.2 17.3 Z" fill="#1685fc"/><path d="M8 0.4 L8 4.4 L12 4.4 Z" fill="#0f62c4"/><rect x="4.2" y="6.4" width="14.4" height="8.4" rx="1.6" fill="#1685fc" stroke="#252526" stroke-width="0.7"/><text x="5.6" y="12.9" font-family="Liberation Sans,sans-serif" font-weight="bold" font-size="6.2" fill="#24507f" textLength="11.6" lengthAdjust="spacingAndGlyphs">PHP</text></svg><svg class="abs" style="left:402px;top:11.5px" width="18" height="18" viewBox="0 0 18 18"><rect x="1.1" y="1.4" width="15.2" height="15.2" rx="1.6" fill="none" stroke="#c5c5c5" stroke-width="1.8"/><path d="M8.6 1.4 L8.6 16.6" stroke="#c5c5c5" stroke-width="1.6"/></svg><div class="dots" style="left:442px;top:20px"><i style="left:0;background:#c8c8c8"></i><i style="left:6.3px;background:#c8c8c8"></i><i style="left:12.6px;background:#c8c8c8"></i></div></div>
<div class="bc" style="left:915px;top:536px;width:471.5px"><span class="" style="left:18px;letter-spacing:0.134px;">js</span><svg class="abs" style="left:35.6px;top:8.2px" width="8" height="13" viewBox="0 0 8 13"><path d="M0.9 0.7 L6.7 6.5 L0.9 12.3" fill="none" stroke="#969696" stroke-width="1.25"/></svg><span class="" style="left:48.8px;font-size:14.9px;letter-spacing:0.620px;top:1.5px;">0705</span><svg class="abs" style="left:90.4px;top:8.2px" width="8" height="13" viewBox="0 0 8 13"><path d="M0.9 0.7 L6.7 6.5 L0.9 12.3" fill="none" stroke="#969696" stroke-width="1.25"/></svg><span class="" style="left:103.8px;font-size:14.9px;letter-spacing:0.620px;top:1.5px;">0705</span><svg class="abs" style="left:145.4px;top:8.2px" width="8" height="13" viewBox="0 0 8 13"><path d="M0.9 0.7 L6.7 6.5 L0.9 12.3" fill="none" stroke="#969696" stroke-width="1.25"/></svg><span class="" style="left:159.4px;letter-spacing:0.566px;">node</span><svg class="abs" style="left:202.4px;top:8.2px" width="8" height="13" viewBox="0 0 8 13"><path d="M0.9 0.7 L6.7 6.5 L0.9 12.3" fill="none" stroke="#969696" stroke-width="1.25"/></svg><span class="js" style="left:221.2px;top:0px;">JS</span><span class="" style="left:243.6px;letter-spacing:-0.327px;">a.js</span><svg class="abs" style="left:272.8px;top:8.2px" width="8" height="13" viewBox="0 0 8 13"><path d="M0.9 0.7 L6.7 6.5 L0.9 12.3" fill="none" stroke="#969696" stroke-width="1.25"/></svg><svg class="abs" style="left:286.7px;top:7.8px" width="18.4" height="12" viewBox="0 0 19 13"><path d="M3.6 0.8 L0.9 0.8 L0.9 12.2 L3.6 12.2 M15.4 0.8 L18.1 0.8 L18.1 12.2 L15.4 12.2" fill="none" stroke="#75beff" stroke-width="1.5"/><path d="M4.8 5.8 L9.8 3.6 L14.2 4.6 L14.2 8 L9.4 10 L4.8 9 Z M4.8 5.8 L9.4 6.8 L14.2 4.6 M9.4 6.8 L9.4 10" fill="none" stroke="#75beff" stroke-width="1.1" stroke-linejoin="round"/></svg><span class="" style="left:307.9px;letter-spacing:0.670px;">&lt;unknown&gt;</span><svg class="abs" style="left:400.8px;top:8.2px" width="8" height="13" viewBox="0 0 8 13"><path d="M0.9 0.7 L6.7 6.5 L0.9 12.3" fill="none" stroke="#969696" stroke-width="1.25"/></svg><svg class="abs" style="left:416.5px;top:5px" width="15" height="16.875" viewBox="0 0 16 18"><path d="M8 0.9 L15.2 4.9 L15.2 13.1 L8 17.1 L0.8 13.1 L0.8 4.9 Z M0.8 4.9 L8 9 L15.2 4.9 M8 9 L8 17.1" fill="none" stroke="#b180d7" stroke-width="1.35" stroke-linejoin="round"/></svg><span class="" style="left:436.4px;letter-spacing:0.684px;">&lt;function&gt;</span></div>
<div class="ed" style="left:915px;top:563px;width:421px;height:328px">
<div class="cl" style="left:83.5px;top:94.9px;width:381.5px"></div>
<div class="ig" style="left:83px;top:23.65px;height:142.5px"></div>
<div class="ig" style="left:122px;top:47.4px;height:95px"></div>
<div class="ig" style="left:161px;top:71.15px;height:23.75px"></div>
<div class="ig" style="left:83px;top:261.15px;height:190px"></div>
<div class="ig" style="left:122px;top:308.65px;height:95px"></div>
<div class="ig" style="left:161px;top:332.4px;height:23.75px"></div>
<div class="no" style="top:1.6px;width:51px">1</div>
<div class="ln" style="top:1.6px;left:82.2px"><span class="v">module</span>.<span class="v">exports</span>=(<span class="k">function</span> () {  <span class="c">//<span class="z">导出</span></span></div>
<div class="no" style="top:25.35px;width:51px">2</div>
<div class="ln" style="top:25.35px;left:82.2px">    <span class="r">return</span> {<span class="c">//  <span class="z">自执行，导出的是一个对象</span></span></div>
<div class="no" style="top:49.1px;width:51px">3</div>
<div class="ln" style="top:49.1px;left:82.2px">        <span class="f">a</span>:<span class="k">function</span> () {  <span class="c">//<span class="z">对象方法</span></span></div>
<div class="no" style="top:72.85px;width:51px">4</div>
<div class="ln" style="top:72.85px;left:82.2px">            <span class="t">console</span>.<span class="f">log</span>(<span class="k">this</span>.<span class="v">b</span>);  <span class="c">//<span class="z">对象属性</span></span></div>
<div class="no a" style="top:96.6px;width:51px">5</div>
<div class="ln" style="top:96.6px;left:82.2px">        },</div>
<div class="no" style="top:120.35px;width:51px">6</div>
<div class="ln" style="top:120.35px;left:82.2px">        <span class="v">b</span>:<span class="n">5</span>  <span class="c">//<span class="z">对象属性</span></span></div>
<div class="no" style="top:144.1px;width:51px">7</div>
<div class="ln" style="top:144.1px;left:82.2px">    }</div>
<div class="no" style="top:167.85px;width:51px">8</div>
<div class="ln" style="top:167.85px;left:82.2px">})();<span class="c">//<span class="z">自执行</span></span></div>
<div class="no" style="top:191.6px;width:51px">9</div>
<div class="no" style="top:215.35px;width:51px">10</div>
<div class="ln" style="top:215.35px;left:82.2px"><span class="c">/*</span></div>
<div class="no" style="top:239.1px;width:51px">11</div>
<div class="ln" style="top:239.1px;left:82.2px"><span class="c"><span class="z">导出的是一个对象</span></span></div>
<div class="no" style="top:262.85px;width:51px">12</div>
<div class="no" style="top:286.6px;width:51px">13</div>
<div class="ln" style="top:286.6px;left:82.2px"><span class="c">  return {//  <span class="z">自执行，导出的是一个对象</span></span></div>
<div class="no" style="top:310.35px;width:51px">14</div>
<div class="ln" style="top:310.35px;left:82.2px"><span class="c">        a:function () {  //<span class="z">对象方法</span></span></div>
<div class="no" style="top:334.1px;width:51px">15</div>
<div class="ln" style="top:334.1px;left:82.2px"><span class="c">            console.log(this.b);  //<span class="z">对象属性</span></span></div>
<div class="no" style="top:357.85px;width:51px">16</div>
<div class="ln" style="top:357.85px;left:82.2px"><span class="c">        },</span></div>
<div class="no" style="top:381.6px;width:51px">17</div>
<div class="ln" style="top:381.6px;left:82.2px"><span class="c">        b:5  //<span class="z">对象属性</span></span></div>
<div class="no" style="top:405.35px;width:51px">18</div>
<div class="ln" style="top:405.35px;left:82.2px"><span class="c">    }</span></div>
<div class="no" style="top:429.1px;width:51px">19</div>
<div class="ln" style="top:429.1px;left:82.2px"><span class="c">})();//<span class="z">自执行</span></span></div>
<div class="no" style="top:452.85px;width:51px">20</div>
<div class="ln" style="top:452.85px;left:82.2px"><span class="c">*/</span></div>
</div>
<div class="hd" style="left:998px;top:583px"><i style="left:0"></i><i style="left:5px"></i><i style="left:10px"></i></div>
<div class="abs" style="left:1336px;top:563.3px;width:34px;height:328px;background:#1e1e1e;box-shadow:-2px 0 3px rgba(0,0,0,.5);overflow:hidden"><div class="mm"><i style="left:0px;top:0.2px;width:6px;background:#9cdcfe"></i><i style="left:6px;top:0.2px;width:1px;background:#d4d4d4"></i><i style="left:7px;top:0.2px;width:7px;background:#9cdcfe"></i><i style="left:14px;top:0.2px;width:2px;background:#d4d4d4"></i><i style="left:16px;top:0.2px;width:8px;background:#569cd6"></i><i style="left:25px;top:0.2px;width:2px;background:#d4d4d4"></i><i style="left:28px;top:0.2px;width:1px;background:#d4d4d4"></i><i style="left:31px;top:0.2px;width:3px;background:#6a9955"></i><i style="left:4px;top:2.2px;width:6px;background:#c586c0"></i><i style="left:11px;top:2.2px;width:1px;background:#d4d4d4"></i><i style="left:12px;top:2.2px;width:2px;background:#6a9955"></i><i style="left:16px;top:2.2px;width:18px;background:#6a9955"></i><i style="left:8px;top:4.2px;width:1px;background:#dcdcaa"></i><i style="left:9px;top:4.2px;width:1px;background:#d4d4d4"></i><i style="left:10px;top:4.2px;width:8px;background:#569cd6"></i><i style="left:19px;top:4.2px;width:2px;background:#d4d4d4"></i><i style="left:22px;top:4.2px;width:1px;background:#d4d4d4"></i><i style="left:25px;top:4.2px;width:9px;background:#6a9955"></i><i style="left:12px;top:6.2px;width:7px;background:#4ec9b0"></i><i style="left:19px;top:6.2px;width:1px;background:#d4d4d4"></i><i style="left:20px;top:6.2px;width:3px;background:#dcdcaa"></i><i style="left:23px;top:6.2px;width:1px;background:#d4d4d4"></i><i style="left:24px;top:6.2px;width:4px;background:#569cd6"></i><i style="left:28px;top:6.2px;width:1px;background:#d4d4d4"></i><i style="left:29px;top:6.2px;width:1px;background:#9cdcfe"></i><i style="left:30px;top:6.2px;width:2px;background:#d4d4d4"></i><i style="left:8px;top:8.2px;width:2px;background:#d4d4d4"></i><i style="left:8px;top:10.2px;width:1px;background:#9cdcfe"></i><i style="left:9px;top:10.2px;width:1px;background:#d4d4d4"></i><i style="left:10px;top:10.2px;width:1px;background:#b5cea8"></i><i style="left:13px;top:10.2px;width:10px;background:#6a9955"></i><i style="left:4px;top:12.2px;width:1px;background:#d4d4d4"></i><i style="left:0px;top:14.2px;width:5px;background:#d4d4d4"></i><i style="left:5px;top:14.2px;width:8px;background:#6a9955"></i><i style="left:0px;top:18.2px;width:2px;background:#6a9955"></i><i style="left:0px;top:20.2px;width:16px;background:#6a9955"></i><i style="left:2px;top:24.2px;width:6px;background:#6a9955"></i><i style="left:9px;top:24.2px;width:3px;background:#6a9955"></i><i style="left:14px;top:24.2px;width:20px;background:#6a9955"></i><i style="left:8px;top:26.2px;width:10px;background:#6a9955"></i><i style="left:19px;top:26.2px;width:2px;background:#6a9955"></i><i style="left:22px;top:26.2px;width:1px;background:#6a9955"></i><i style="left:25px;top:26.2px;width:9px;background:#6a9955"></i><i style="left:12px;top:28.2px;width:20px;background:#6a9955"></i><i style="left:8px;top:30.2px;width:2px;background:#6a9955"></i><i style="left:8px;top:32.2px;width:3px;background:#6a9955"></i><i style="left:13px;top:32.2px;width:10px;background:#6a9955"></i><i style="left:4px;top:34.2px;width:1px;background:#6a9955"></i><i style="left:0px;top:36.2px;width:13px;background:#6a9955"></i><i style="left:0px;top:38.2px;width:2px;background:#6a9955"></i></div></div>
<div class="abs" style="left:1370px;top:563.3px;width:17px;height:328px;border-left:1px solid #3a3a3a;border-top:1px solid #3a3a3a"><div class="abs" style="left:0;top:0;width:16px;height:188.5px;background:#3a3a3a"></div><div class="abs" style="left:0;top:42.5px;width:16px;height:2.2px;background:#999"></div></div>
<div class="vdiv" style="left:1386.8px;top:10px;width:1.5px;height:881px"></div>
<div class="tabs" style="left:1388.3px;top:10px;width:501px"><div class="tab" style="left:0px;width:148.6px;background:#1e1e1e;border-right:1px solid #252526"><span class="js" style="left:16.7px;top:-0.4px;">JS</span><span class="lb" style="left:38.8px;color:#aaaaaa;letter-spacing:-0.197px;">c.js</span><svg class="abs" style="left:125.4px;top:15.7px" width="11" height="11" viewBox="0 0 11 11"><path d="M0.5 0.5 L10.5 10.5 M10.5 0.5 L0.5 10.5" stroke="#a4a4a4" stroke-width="1.2" fill="none"/></svg></div><div class="tab" style="left:148.6px;width:149.3px;background:#2d2d2d;border-right:1px solid #252526"><span class="js" style="left:17.8px;top:-0.4px;">JS</span><span class="lb" style="left:40.7px;color:#636363;letter-spacing:0.132px;">main.js</span></div><div class="dots" style="left:487px;top:21.2px"><i style="left:0;background:#c8c8c8"></i><i style="left:6.3px;background:#c8c8c8"></i><i style="left:12.6px;background:#c8c8c8"></i></div></div>
<div class="bc" style="left:1388.3px;top:53px;width:501px"><span class="" style="left:19px;letter-spacing:0.134px;">js</span><svg class="abs" style="left:36.6px;top:8.2px" width="8" height="13" viewBox="0 0 8 13"><path d="M0.9 0.7 L6.7 6.5 L0.9 12.3" fill="none" stroke="#969696" stroke-width="1.25"/></svg><span class="" style="left:49.8px;font-size:14.9px;letter-spacing:0.620px;top:1.5px;">0705</span><svg class="abs" style="left:91.4px;top:8.2px" width="8" height="13" viewBox="0 0 8 13"><path d="M0.9 0.7 L6.7 6.5 L0.9 12.3" fill="none" stroke="#969696" stroke-width="1.25"/></svg><span class="" style="left:104.8px;font-size:14.9px;letter-spacing:0.620px;top:1.5px;">0705</span><svg class="abs" style="left:146.4px;top:8.2px" width="8" height="13" viewBox="0 0 8 13"><path d="M0.9 0.7 L6.7 6.5 L0.9 12.3" fill="none" stroke="#969696" stroke-width="1.25"/></svg><span class="" style="left:160.4px;letter-spacing:0.566px;">node</span><svg class="abs" style="left:203.4px;top:8.2px" width="8" height="13" viewBox="0 0 8 13"><path d="M0.9 0.7 L6.7 6.5 L0.9 12.3" fill="none" stroke="#969696" stroke-width="1.25"/></svg><span class="js" style="left:222.2px;top:0px;">JS</span><span class="" style="left:244.6px;letter-spacing:-0.197px;">c.js</span><svg class="abs" style="left:273.1px;top:8.2px" width="8" height="13" viewBox="0 0 8 13"><path d="M0.9 0.7 L6.7 6.5 L0.9 12.3" fill="none" stroke="#969696" stroke-width="1.25"/></svg><span class="" style="left:286.7px;letter-spacing:-0.500px;">...</span></div>
<div class="ed" style="left:1388.3px;top:80.5px;width:459.7px;height:810.5px">
<div class="cl" style="left:83.7px;top:451.75px;width:417px"></div>
<div class="ig" style="left:83.7px;top:24.25px;height:285px"></div>
<div class="ig" style="left:122.2px;top:143px;height:118.75px"></div>
<div class="ig" style="left:160.7px;top:214.25px;height:23.75px"></div>
<div class="no" style="top:2.2px;width:51.3px">1</div>
<svg class="fd" style="left:62.7px;top:8.5px" width="14" height="10" viewBox="0 0 14 10"><path d="M1.5 2 L7 7.5 L12.5 2" fill="none" stroke="#c5c5c5" stroke-width="1.3"/></svg>
<div class="ln" style="top:2.2px;left:83.9px"><span class="v">module</span>.<span class="v">exports</span>=(<span class="k">function</span> () {  <span class="c">//<span class="z">导出</span></span></div>
<div class="no" style="top:25.95px;width:51.3px">2</div>
<svg class="fd" style="left:62.7px;top:32.25px" width="14" height="10" viewBox="0 0 14 10"><path d="M1.5 2 L7 7.5 L12.5 2" fill="none" stroke="#c5c5c5" stroke-width="1.3"/></svg>
<div class="ln" style="top:25.95px;left:83.9px">    <span class="k">function</span> <span class="f">Box</span>() {  <span class="c">//Box  <span class="z">类</span></span></div>
<div class="no" style="top:49.7px;width:51.3px">3</div>
<div class="no" style="top:73.45px;width:51.3px">4</div>
<div class="ln" style="top:73.45px;left:83.9px">    }</div>
<div class="no" style="top:97.2px;width:51.3px">5</div>
<div class="ln" style="top:97.2px;left:83.9px">    <span class="c">//object.assign  <span class="z">是什么还记得不？</span>  <span class="z">复制</span></span></div>
<div class="no" style="top:120.95px;width:51.3px">6</div>
<svg class="fd" style="left:62.7px;top:127.25px" width="14" height="10" viewBox="0 0 14 10"><path d="M1.5 2 L7 7.5 L12.5 2" fill="none" stroke="#c5c5c5" stroke-width="1.3"/></svg>
<div class="ln" style="top:120.95px;left:83.9px">    <span class="t">Object</span>.<span class="f">assign</span>(<span class="v">Box</span>.<span class="v">prototype</span>,{  <span class="c">//Box<span class="z">的原型</span></span></div>
<div class="no" style="top:144.7px;width:51.3px">7</div>
<div class="ln" style="top:144.7px;left:83.9px">        <span class="v">a</span>:<span class="n">1</span>, <span class="c">//<span class="z">属性</span></span></div>
<div class="no" style="top:168.45px;width:51.3px">8</div>
<div class="ln" style="top:168.45px;left:83.9px">        <span class="v">b</span>:<span class="n">2</span>,</div>
<div class="no" style="top:192.2px;width:51.3px">9</div>
<svg class="fd" style="left:62.7px;top:198.5px" width="14" height="10" viewBox="0 0 14 10"><path d="M1.5 2 L7 7.5 L12.5 2" fill="none" stroke="#c5c5c5" stroke-width="1.3"/></svg>
<div class="ln" style="top:192.2px;left:83.9px">        <span class="f">play</span>:<span class="k">function</span> () { <span class="c">//<span class="z">方法</span></span></div>
<div class="no" style="top:215.95px;width:51.3px">10</div>
<div class="ln" style="top:215.95px;left:83.9px">            <span class="t">console</span>.<span class="f">log</span>(<span class="k">this</span>.<span class="v">a</span>+<span class="k">this</span>.<span class="v">b</span>);</div>
<div class="no" style="top:239.7px;width:51.3px">11</div>
<div class="ln" style="top:239.7px;left:83.9px">        }</div>
<div class="no" style="top:263.45px;width:51.3px">12</div>
<div class="ln" style="top:263.45px;left:83.9px">    });</div>
<div class="no" style="top:287.2px;width:51.3px">13</div>
<div class="ln" style="top:287.2px;left:83.9px">    <span class="r">return</span> <span class="f">Box</span>;   <span class="c">//<span class="z">导出的是</span>Box</span></div>
<div class="no" style="top:310.95px;width:51.3px">14</div>
<div class="ln" style="top:310.95px;left:83.9px">})(); <span class="c">//<span class="z">自执行函数</span></span></div>
<div class="no" style="top:334.7px;width:51.3px">15</div>
<div class="no" style="top:358.45px;width:51.3px">16</div>
<div class="ln" style="top:358.45px;left:83.9px"><span class="c">/*</span></div>
<div class="no" style="top:382.2px;width:51.3px">17</div>
<div class="no" style="top:405.95px;width:51.3px">18</div>
<div class="ln" style="top:405.95px;left:83.9px"><span class="c"><span class="z">类，只能</span>es5<span class="z">能够导出，</span>es6<span class="z">不能够到存储</span></span></div>
<div class="no" style="top:429.7px;width:51.3px">19</div>
<div class="no a" style="top:453.45px;width:51.3px">20</div>
<div class="no" style="top:477.2px;width:51.3px">21</div>
<div class="no" style="top:500.95px;width:51.3px">22</div>
<div class="no" style="top:524.7px;width:51.3px">23</div>
<div class="no" style="top:548.45px;width:51.3px">24</div>
<div class="ln" style="top:548.45px;left:83.9px"><span class="c">*/</span></div>
</div>
<div class="hd" style="left:1473px;top:101px"><i style="left:0"></i><i style="left:5px"></i><i style="left:10px"></i></div>
<div class="abs" style="left:1848px;top:81px;width:40px;height:810px;background:#1e1e1e;box-shadow:-2px 0 3px rgba(0,0,0,.5);overflow:hidden"><div class="mm"><i style="left:0px;top:0.2px;width:6px;background:#9cdcfe"></i><i style="left:6px;top:0.2px;width:1px;background:#d4d4d4"></i><i style="left:7px;top:0.2px;width:7px;background:#9cdcfe"></i><i style="left:14px;top:0.2px;width:2px;background:#d4d4d4"></i><i style="left:16px;top:0.2px;width:8px;background:#569cd6"></i><i style="left:25px;top:0.2px;width:2px;background:#d4d4d4"></i><i style="left:28px;top:0.2px;width:1px;background:#d4d4d4"></i><i style="left:31px;top:0.2px;width:6px;background:#6a9955"></i><i style="left:4px;top:2.2px;width:8px;background:#569cd6"></i><i style="left:13px;top:2.2px;width:3px;background:#dcdcaa"></i><i style="left:16px;top:2.2px;width:2px;background:#d4d4d4"></i><i style="left:19px;top:2.2px;width:1px;background:#d4d4d4"></i><i style="left:22px;top:2.2px;width:5px;background:#6a9955"></i><i style="left:29px;top:2.2px;width:2px;background:#6a9955"></i><i style="left:4px;top:6.2px;width:1px;background:#d4d4d4"></i><i style="left:4px;top:8.2px;width:15px;background:#6a9955"></i><i style="left:21px;top:8.2px;width:16px;background:#6a9955"></i><i style="left:39px;top:8.2px;width:1px;background:#6a9955"></i><i style="left:4px;top:10.2px;width:6px;background:#4ec9b0"></i><i style="left:10px;top:10.2px;width:1px;background:#d4d4d4"></i><i style="left:11px;top:10.2px;width:6px;background:#dcdcaa"></i><i style="left:17px;top:10.2px;width:1px;background:#d4d4d4"></i><i style="left:18px;top:10.2px;width:3px;background:#9cdcfe"></i><i style="left:21px;top:10.2px;width:1px;background:#d4d4d4"></i><i style="left:22px;top:10.2px;width:9px;background:#9cdcfe"></i><i style="left:31px;top:10.2px;width:2px;background:#d4d4d4"></i><i style="left:35px;top:10.2px;width:5px;background:#6a9955"></i><i style="left:8px;top:12.2px;width:1px;background:#9cdcfe"></i><i style="left:9px;top:12.2px;width:1px;background:#d4d4d4"></i><i style="left:10px;top:12.2px;width:1px;background:#b5cea8"></i><i style="left:11px;top:12.2px;width:1px;background:#d4d4d4"></i><i style="left:13px;top:12.2px;width:6px;background:#6a9955"></i><i style="left:8px;top:14.2px;width:1px;background:#9cdcfe"></i><i style="left:9px;top:14.2px;width:1px;background:#d4d4d4"></i><i style="left:10px;top:14.2px;width:1px;background:#b5cea8"></i><i style="left:11px;top:14.2px;width:1px;background:#d4d4d4"></i><i style="left:8px;top:16.2px;width:4px;background:#dcdcaa"></i><i style="left:12px;top:16.2px;width:1px;background:#d4d4d4"></i><i style="left:13px;top:16.2px;width:8px;background:#569cd6"></i><i style="left:22px;top:16.2px;width:2px;background:#d4d4d4"></i><i style="left:25px;top:16.2px;width:1px;background:#d4d4d4"></i><i style="left:27px;top:16.2px;width:6px;background:#6a9955"></i><i style="left:12px;top:18.2px;width:7px;background:#4ec9b0"></i><i style="left:19px;top:18.2px;width:1px;background:#d4d4d4"></i><i style="left:20px;top:18.2px;width:3px;background:#dcdcaa"></i><i style="left:23px;top:18.2px;width:1px;background:#d4d4d4"></i><i style="left:24px;top:18.2px;width:4px;background:#569cd6"></i><i style="left:28px;top:18.2px;width:1px;background:#d4d4d4"></i><i style="left:29px;top:18.2px;width:1px;background:#9cdcfe"></i><i style="left:30px;top:18.2px;width:1px;background:#d4d4d4"></i><i style="left:31px;top:18.2px;width:4px;background:#569cd6"></i><i style="left:35px;top:18.2px;width:1px;background:#d4d4d4"></i><i style="left:36px;top:18.2px;width:1px;background:#9cdcfe"></i><i style="left:37px;top:18.2px;width:2px;background:#d4d4d4"></i><i style="left:8px;top:20.2px;width:1px;background:#d4d4d4"></i><i style="left:4px;top:22.2px;width:3px;background:#d4d4d4"></i><i style="left:4px;top:24.2px;width:6px;background:#c586c0"></i><i style="left:11px;top:24.2px;width:3px;background:#dcdcaa"></i><i style="left:14px;top:24.2px;width:1px;background:#d4d4d4"></i><i style="left:18px;top:24.2px;width:13px;background:#6a9955"></i><i style="left:0px;top:26.2px;width:5px;background:#d4d4d4"></i><i style="left:6px;top:26.2px;width:12px;background:#6a9955"></i><i style="left:0px;top:30.2px;width:2px;background:#6a9955"></i><i style="left:0px;top:34.2px;width:36px;background:#6a9955"></i><i style="left:0px;top:46.2px;width:2px;background:#6a9955"></i></div></div>
<div class="abs" style="left:1888px;top:81px;width:1px;height:810px;background:#3a3a3a"></div>
<div class="abs" style="left:0;top:715.3px;height:44px;line-height:44px;font-size:33px;color:#f5251b;white-space:pre"><span class="abs" style="left:395px;top:0;font-family:'Liberation Sans','Noto Sans CJK SC',sans-serif;font-size:32.9px">把，</span><span class="abs" style="left:461.5px;top:0;letter-spacing:-0.286px">a.js</span><span class="abs" style="left:512px;top:0;font-family:'Liberation Sans','Noto Sans CJK SC',sans-serif;font-size:32.9px">、</span><span class="abs" style="left:545.5px;top:0;letter-spacing:0.380px">b.js</span><span class="abs" style="left:598px;top:0;font-family:'Liberation Sans','Noto Sans CJK SC',sans-serif;font-size:32.9px">、</span><span class="abs" style="left:630.5px;top:0;letter-spacing:0.167px">c.js</span><span class="abs" style="left:698.8px;top:0;font-family:'Liberation Sans','Noto Sans CJK SC',sans-serif;font-size:32.9px">在</span><span class="abs" style="left:733px;top:0;letter-spacing:0.995px">main.js</span><span class="abs" style="left:842.4px;top:0;font-family:'Liberation Sans','Noto Sans CJK SC',sans-serif;font-size:32.9px">中加载的方法</span></div>
<div class="abs" style="left:0;top:757.8px;height:44px;line-height:44px;font-size:33px;color:#f5251b;white-space:pre"><span class="abs" style="left:395px;top:0;font-family:'Liberation Sans','Noto Sans CJK SC',sans-serif;font-size:32.9px">通过</span><span class="abs" style="left:461.5px;top:0;letter-spacing:1.711px">require</span><span class="abs" style="left:573px;top:0;font-family:'Liberation Sans','Noto Sans CJK SC',sans-serif;font-size:32.9px">（）</span></div>
<div class="abs" style="left:0;top:800.3px;height:44px;line-height:44px;font-size:33px;color:#f5251b;white-space:pre"><span class="abs" style="left:395.5px;top:0;letter-spacing:1.779px">a\b\c.js</span><span class="abs" style="left:519px;top:0;font-family:'Liberation Sans','Noto Sans CJK SC',sans-serif;font-size:32.9px">利用</span><span class="abs" style="left:587.5px;top:0;letter-spacing:1.490px">module.exports</span><span class="abs" style="left:831px;top:0;font-family:'Liberation Sans','Noto Sans CJK SC',sans-serif;font-size:32.9px">导出</span></div>
<div class="abs" style="left:1775.2px;top:787.8px;width:120px;height:32px;border-radius:4.5px;background:#22a0ff;overflow:hidden"><div class="abs" style="left:37.8px;top:2px;width:26.2px;height:28px;background:#84dfff"></div><div class="abs" style="left:64px;top:2px;width:60px;height:28px;background:linear-gradient(#dff4ff,#c6ebff)"></div><svg class="abs" style="left:6px;top:4px" width="28" height="24" viewBox="0 0 28 24"><g fill="none" stroke="#fff" stroke-width="2.8"><circle cx="13.3" cy="7.1" r="4.3"/><circle cx="7.5" cy="14.3" r="4.3"/><path d="M15.6 17.6 A4.3 4.3 0 1 0 15.9 11.6 L10.6 17.4"/></g></svg><svg class="abs" style="left:41px;top:9px" width="11" height="13" viewBox="0 0 11 13"><path d="M5.5 0 L5.5 8" fill="none" stroke="#0d9bea" stroke-width="2.2"/><path d="M0.4 6 L10.6 6 L5.5 12.6 Z" fill="#0d9bea"/></svg><span class="abs" style="left:56.3px;top:0;line-height:33px;font-size:16.6px;color:#6cc2ff;white-space:pre">128</span><span class="abs" style="left:87.4px;top:0;line-height:33px;font-size:16.6px;color:#6cc2ff;white-space:pre;letter-spacing:-1.3px">KB/s</span></div>
</body></html>
